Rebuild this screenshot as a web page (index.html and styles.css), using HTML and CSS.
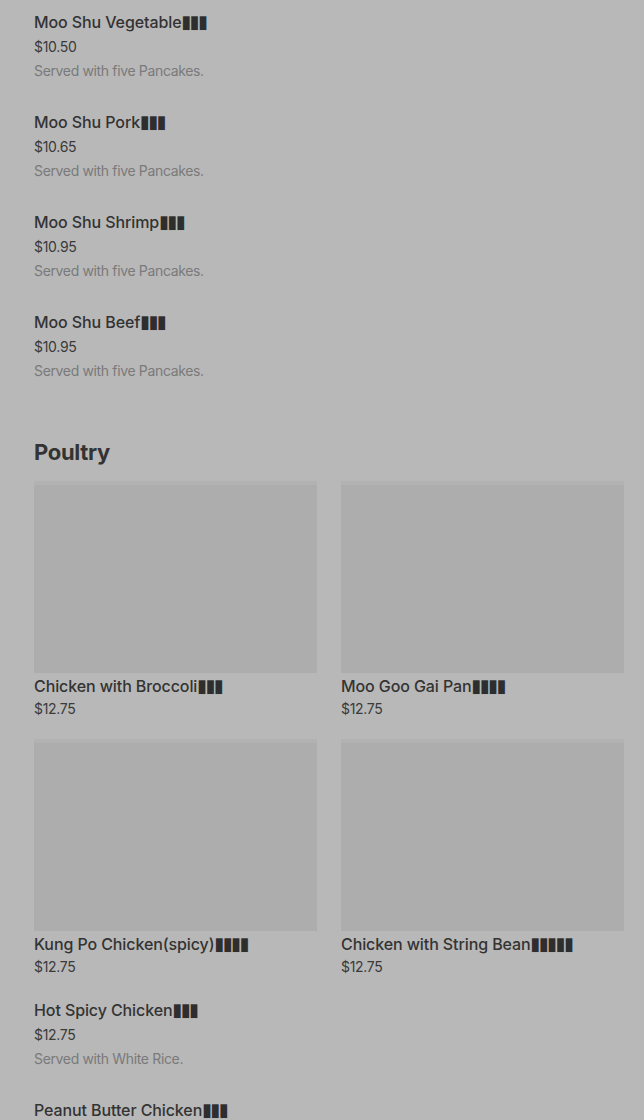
FILE: index.html
```html
<!DOCTYPE html>
<html lang="en">
<head>
<meta charset="utf-8">
<title>Menu</title>
<link rel="stylesheet" href="styles.css">
</head>
<body>
<main class="menu">
  <section class="list">
    <div class="item">
      <div class="name">Moo Shu Vegetable<span class="tofu">▮▮▮</span></div>
      <div class="price">$10.50</div>
      <div class="desc">Served with five Pancakes.</div>
    </div>
    <div class="item">
      <div class="name">Moo Shu Pork<span class="tofu">▮▮▮</span></div>
      <div class="price">$10.65</div>
      <div class="desc">Served with five Pancakes.</div>
    </div>
    <div class="item">
      <div class="name">Moo Shu Shrimp<span class="tofu">▮▮▮</span></div>
      <div class="price">$10.95</div>
      <div class="desc">Served with five Pancakes.</div>
    </div>
    <div class="item">
      <div class="name">Moo Shu Beef<span class="tofu">▮▮▮</span></div>
      <div class="price">$10.95</div>
      <div class="desc">Served with five Pancakes.</div>
    </div>
  </section>

  <h2 class="heading">Poultry</h2>

  <section class="grid">
    <div class="card">
      <div class="photo"></div>
      <div class="name">Chicken with Broccoli<span class="tofu">▮▮▮</span></div>
      <div class="price price-card">$12.75</div>
    </div>
    <div class="card">
      <div class="photo"></div>
      <div class="name">Moo Goo Gai Pan<span class="tofu">▮▮▮▮</span></div>
      <div class="price price-card">$12.75</div>
    </div>
    <div class="card">
      <div class="photo"></div>
      <div class="name">Kung Po Chicken(spicy)<span class="tofu">▮▮▮▮</span></div>
      <div class="price price-card">$12.75</div>
    </div>
    <div class="card">
      <div class="photo"></div>
      <div class="name">Chicken with String Bean<span class="tofu">▮▮▮▮▮</span></div>
      <div class="price price-card">$12.75</div>
    </div>
  </section>

  <section class="list list-after">
    <div class="item">
      <div class="name">Hot Spicy Chicken<span class="tofu">▮▮▮</span></div>
      <div class="price">$12.75</div>
      <div class="desc">Served with White Rice.</div>
    </div>
    <div class="item">
      <div class="name">Peanut Butter Chicken<span class="tofu">▮▮▮</span></div>
      <div class="price">$12.75</div>
      <div class="desc">Served with White Rice.</div>
    </div>
  </section>
</main>
</body>
</html>
```

FILE: styles.css
```css
html, body {
  margin: 0;
  padding: 0;
  background: #b8b8b8;
  overflow: hidden;
}

body {
  font-family: Inter, "Noto Sans", sans-serif;
  color: #333333;
}

.menu {
  padding: 10px 20px 0 34px;
}

.list {
  display: flex;
  flex-direction: column;
  gap: 27px;
}

.item {
  display: flex;
  flex-direction: column;
}

.item .price {
  margin-top: 1px;
}

.name {
  font-size: 16px;
  line-height: 24px;
  height: 24px;
  font-weight: 500;
  color: #333333;
  letter-spacing: -0.1px;
  white-space: nowrap;
}

.tofu {
  font-family: "DejaVu Sans", sans-serif;
  font-size: 18px;
  line-height: 0;
  color: #2e2e2e;
  letter-spacing: -1.5px;
}

.price {
  font-size: 14px;
  line-height: 24px;
  color: #3a3a3a;
  letter-spacing: -0.3px;
}

.desc {
  font-size: 14px;
  line-height: 24px;
  color: #7a7a7a;
  letter-spacing: -0.35px;
}

.heading {
  margin: 53px 0 13px;
  font-size: 22px;
  line-height: 32px;
  font-weight: 700;
  color: #333333;
  letter-spacing: -0.3px;
}

.grid {
  display: grid;
  grid-template-columns: 1fr 1fr;
  column-gap: 24px;
  row-gap: 19px;
}

.card {
  display: flex;
  flex-direction: column;
}

.photo {
  height: 188px;
  background: #adadad;
  border-top: 4px solid #b2b2b2;
  margin-bottom: 1px;
}

.price-card {
  line-height: 22px;
}

.list-after {
  margin-top: 20px;
}
```
